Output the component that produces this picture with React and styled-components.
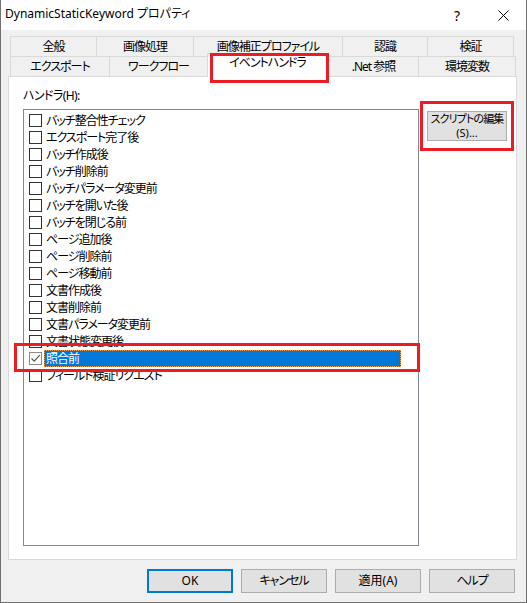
import React from "react";
import styled, { createGlobalStyle } from "styled-components";

const Global = createGlobalStyle`
  html, body { margin: 0; padding: 0; background: #ffffff; }
  body {
    font-family: "Noto Sans", "Noto Sans CJK JP", sans-serif;
    font-size: 12px;
    color: #000;
  }
  * { box-sizing: border-box; }
`;

const Window = styled.div`
  position: relative;
  width: 527px;
  height: 603px;
  border: 1px solid #707070;
  border-top: none;
  background: #f0f0f0;
  display: flex;
  flex-direction: column;
  font-family: "Noto Sans", "Noto Sans CJK JP", sans-serif;
  font-feature-settings: "palt" 1;
  font-size: 12px;
  letter-spacing: -1px;
`;

const TitleBar = styled.div`
  height: 30px;
  background: #ffffff;
  display: flex;
  align-items: center;
  flex-shrink: 0;
  letter-spacing: 0;
`;

const Title = styled.div`
  flex: 1;
  padding-left: 4px;
  font-size: 12px;
  line-height: 16px;
  padding-bottom: 2px;
  color: #000;
`;

const CaptionButton = styled.div`
  width: 46px;
  height: 30px;
  display: flex;
  align-items: center;
  justify-content: center;
  font-size: 14px;
  color: #000;
`;

const Body = styled.div`
  flex: 1;
  display: flex;
  flex-direction: column;
  padding: 6px 0 0 7px;
`;

const TabStrip = styled.div`
  margin-left: 2px;
  display: flex;
  flex-direction: column;
`;

const TabRow = styled.div`
  display: flex;
  height: 20px;
  align-items: flex-end;
`;

const Tab = styled.div`
  width: ${(p) => p.$w}px;
  height: ${(p) => (p.$active ? 24 : 20)}px;
  margin-top: ${(p) => (p.$active ? -3 : 0)}px;
  margin-bottom: ${(p) => (p.$active ? -1 : 0)}px;
  position: relative;
  z-index: ${(p) => (p.$active ? 2 : 0)};
  border-top: 1px solid #d9d9d9;
  border-left: 1px solid #d9d9d9;
  border-right: ${(p) => (p.$last || p.$active ? "1px solid #d9d9d9" : "none")};
  background: ${(p) => (p.$active ? "#ffffff" : "#f0f0f0")};
  display: flex;
  justify-content: center;
  align-items: ${(p) => (p.$active ? "flex-start" : "center")};
  padding-top: ${(p) => (p.$active ? 1 : 0)}px;
  line-height: 16px;
  font-size: 12px;
  white-space: nowrap;
`;

const Page = styled.div`
  width: 509px;
  height: 484px;
  background: #ffffff;
  border: 1px solid #d9d9d9;
  padding: 10px 0 0 14px;
  display: flex;
  flex-direction: column;
  position: relative;
  z-index: 1;
`;

const FieldLabel = styled.div`
  height: 17px;
  line-height: 17px;
  margin-bottom: 5px;
  font-size: 12px;
  letter-spacing: -0.6px;
`;

const PageRow = styled.div`
  display: flex;
  align-items: flex-start;
`;

const ListBox = styled.div`
  width: 396px;
  height: 437px;
  border: 1px solid #828790;
  background: #ffffff;
  padding-top: 2px;
  display: flex;
  flex-direction: column;
`;

const Item = styled.div`
  height: 17px;
  display: flex;
  align-items: center;
  padding-left: 5px;
`;

const Check = styled.div`
  width: 13px;
  height: 13px;
  flex-shrink: 0;
  border: 1px solid ${(p) => (p.$checked ? "#8a8a8a" : "#333333")};
  background: #ffffff;
  margin-right: 2px;
  display: flex;
  align-items: center;
  justify-content: center;
`;

const ItemText = styled.div`
  flex: ${(p) => (p.$selected ? 1 : "0 0 auto")};
  margin-right: ${(p) => (p.$selected ? 17 : 0)}px;
  height: 17px;
  line-height: 15px;
  padding: 0 1px;
  font-size: 12px;
  white-space: nowrap;
  color: ${(p) => (p.$selected ? "#ffffff" : "#000000")};
  background: ${(p) => (p.$selected ? "#0078d7" : "transparent")};
  border: 1px ${(p) => (p.$selected ? "dotted #e8a25a" : "solid transparent")};
`;

const SideButton = styled.div`
  margin-left: 8px;
  margin-top: 2px;
  width: 80px;
  height: 30px;
  background: #e1e1e1;
  border: 1px solid #adadad;
  display: flex;
  flex-direction: column;
  align-items: center;
  justify-content: center;
  font-size: 11px;
  line-height: 14px;
  white-space: nowrap;
  letter-spacing: -0.9px;
`;

const ButtonLine = styled.span`
  display: block;
  height: 14px;
  letter-spacing: ${(p) => (p.$latin ? 0 : -0.9)}px;
`;

const ButtonBar = styled.div`
  display: flex;
  justify-content: flex-end;
  gap: 8px;
  margin-top: 9px;
  padding-right: 11px;
`;

const DialogButton = styled.div`
  width: 86px;
  height: 24px;
  background: #e1e1e1;
  border: ${(p) => (p.$default ? "2px solid #0078d7" : "1px solid #adadad")};
  display: flex;
  align-items: center;
  justify-content: center;
  font-size: 12px;
  line-height: 16px;
  letter-spacing: ${(p) => (p.$latin ? 0 : -1)}px;
`;

const Callout = styled.div`
  position: absolute;
  border: 3px solid #ec1c24;
  pointer-events: none;
  z-index: 5;
`;

const row1 = [
  ["全般", 86],
  ["画像処理", 97],
  ["画像補正プロファイル", 149],
  ["認識", 85],
  ["検証", 87],
];
const row2 = [
  ["エクスポート", 99],
  ["ワークフロー", 98],
  ["イベントハンドラ", 121, true],
  [".Net 参照", 90],
  ["環境変数", 98],
];

const items = [
  "バッチ整合性チェック",
  "エクスポート完了後",
  "バッチ作成後",
  "バッチ削除前",
  "バッチパラメータ変更前",
  "バッチを開いた後",
  "バッチを閉じる前",
  "ページ追加後",
  "ページ削除前",
  "ページ移動前",
  "文書作成後",
  "文書削除前",
  "文書パラメータ変更前",
  "文書状態変更後",
  "照合前",
  "フィールド検証リクエスト",
];

export default function App() {
  return (
    <>
      <Global />
      <Window>
        <TitleBar>
          <Title>DynamicStaticKeyword プロパティ</Title>
          <CaptionButton>?</CaptionButton>
          <CaptionButton>
            <svg width="11" height="11" viewBox="0 0 11 11">
              <path d="M0.5 0.5 L10.5 10.5 M10.5 0.5 L0.5 10.5" stroke="#000" strokeWidth="1" />
            </svg>
          </CaptionButton>
        </TitleBar>
        <Body>
          <TabStrip>
            <TabRow>
              {row1.map(([t, w], i) => (
                <Tab key={t} $w={w} $last={i === row1.length - 1}>
                  {t}
                </Tab>
              ))}
            </TabRow>
            <TabRow>
              {row2.map(([t, w, a], i) => (
                <Tab key={t} $w={w} $active={a} $last={i === row2.length - 1}>
                  {t}
                </Tab>
              ))}
            </TabRow>
          </TabStrip>
          <Page>
            <FieldLabel>ハンドラ(H):</FieldLabel>
            <PageRow>
              <ListBox>
                {items.map((t) => {
                  const sel = t === "照合前";
                  return (
                    <Item key={t}>
                      <Check $checked={sel}>
                        {sel && (
                          <svg width="11" height="11" viewBox="0 0 11 11">
                            <path d="M1.5 5.5 L4.2 8.2 L9.8 2.2" stroke="#555" strokeWidth="1.2" fill="none" />
                          </svg>
                        )}
                      </Check>
                      <ItemText $selected={sel}>{t}</ItemText>
                    </Item>
                  );
                })}
              </ListBox>
              <SideButton>
                <ButtonLine>スクリプトの編集</ButtonLine>
                <ButtonLine $latin>(S)...</ButtonLine>
              </SideButton>
            </PageRow>
          </Page>
          <ButtonBar>
            <DialogButton $default $latin>OK</DialogButton>
            <DialogButton>キャンセル</DialogButton>
            <DialogButton $latin>適用(A)</DialogButton>
            <DialogButton>ヘルプ</DialogButton>
          </ButtonBar>
        </Body>
        <Callout style={{ left: 209, top: 53, width: 119, height: 30 }} />
        <Callout style={{ left: 419, top: 101, width: 94, height: 50 }} />
        <Callout style={{ left: 13, top: 343, width: 406, height: 29 }} />
      </Window>
    </>
  );
}
